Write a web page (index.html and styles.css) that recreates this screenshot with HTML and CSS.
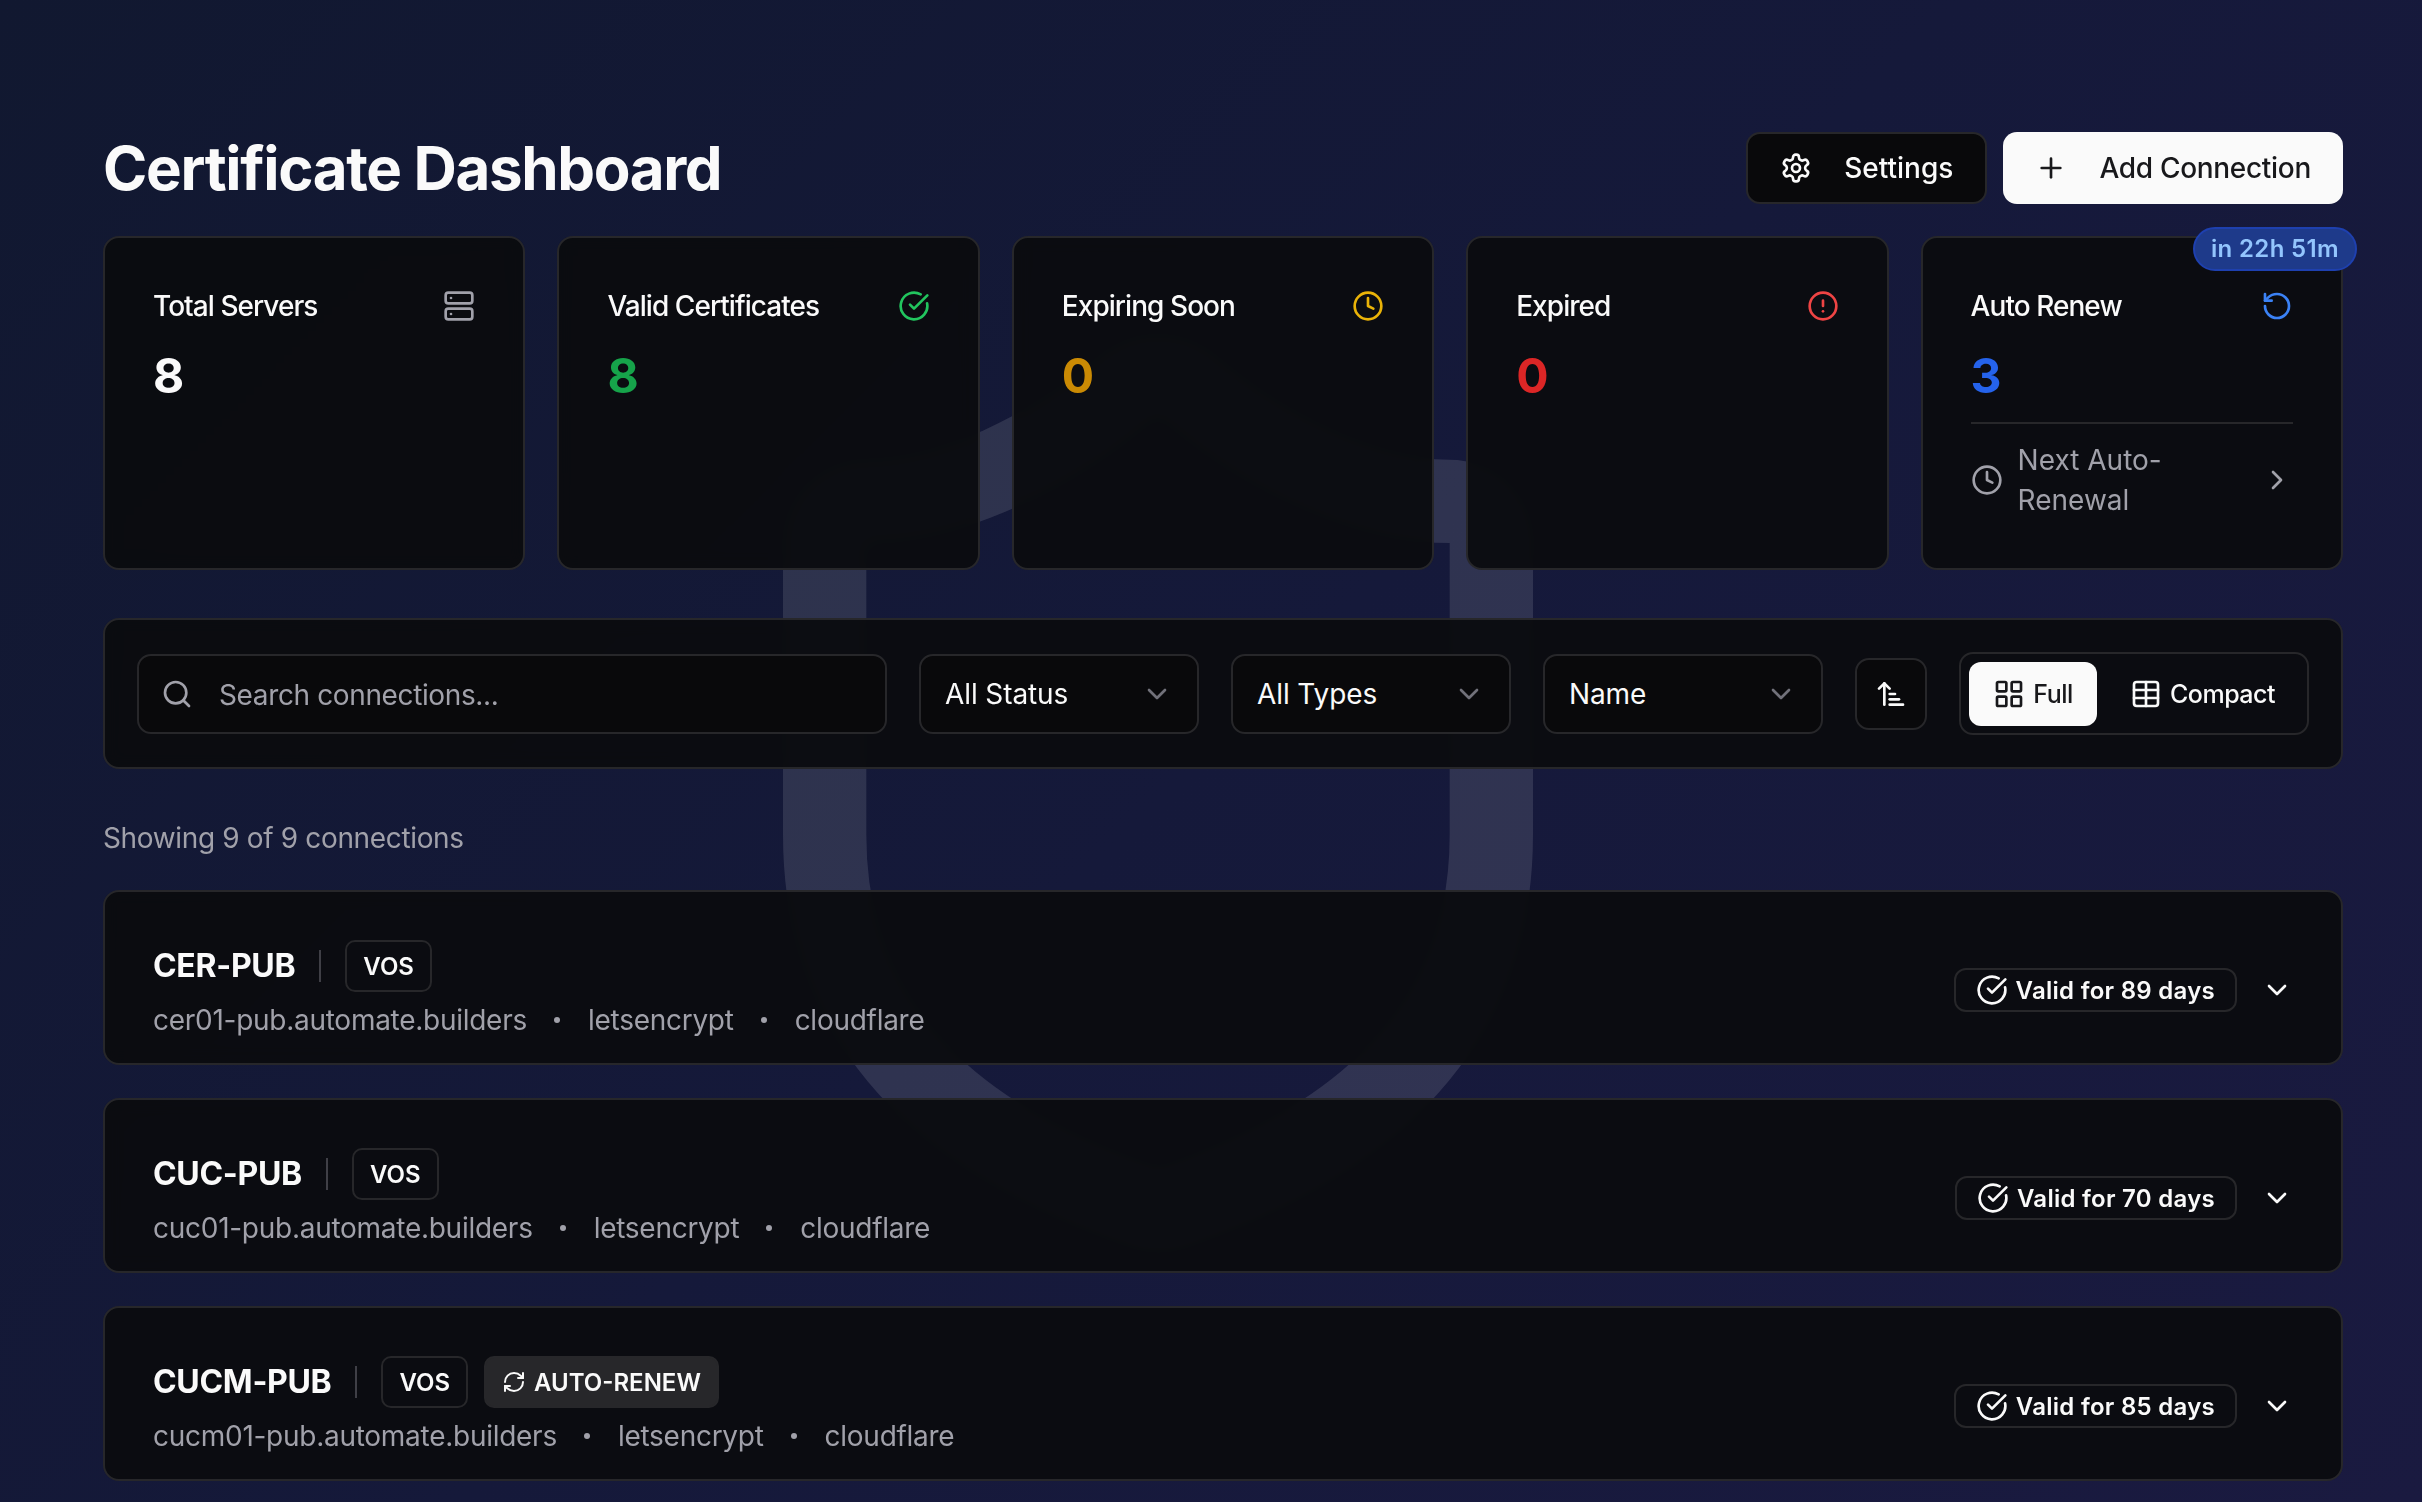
FILE: index.html
```html
<!DOCTYPE html>
<html lang="en">

<head>
    <meta charset="UTF-8">
    <meta name="viewport" content="width=device-width, initial-scale=1.0">
    <title>Certificate Dashboard</title>
    <link rel="stylesheet" href="styles.css">
</head>

<body>
    <!-- icon sprite -->
    <svg class="sprite" xmlns="http://www.w3.org/2000/svg">
        <symbol id="i-shield" viewBox="0 0 24 24"><path d="M20 13c0 5-3.5 7.5-7.66 8.95a1 1 0 0 1-.67-.01C7.5 20.5 4 18 4 13V6a1 1 0 0 1 1-1c2 0 4.5-1.2 6.24-2.72a1.17 1.17 0 0 1 1.52 0C14.51 3.81 17 5 19 5a1 1 0 0 1 1 1z"/></symbol>
        <symbol id="i-gear" viewBox="0 0 24 24"><path d="M12.22 2h-.44a2 2 0 0 0-2 2v.18a2 2 0 0 1-1 1.73l-.43.25a2 2 0 0 1-2 0l-.15-.08a2 2 0 0 0-2.73.73l-.22.38a2 2 0 0 0 .73 2.73l.15.1a2 2 0 0 1 1 1.72v.51a2 2 0 0 1-1 1.74l-.15.09a2 2 0 0 0-.73 2.73l.22.38a2 2 0 0 0 2.73.73l.15-.08a2 2 0 0 1 2 0l.43.25a2 2 0 0 1 1 1.73V20a2 2 0 0 0 2 2h.44a2 2 0 0 0 2-2v-.18a2 2 0 0 1 1-1.73l.43-.25a2 2 0 0 1 2 0l.15.08a2 2 0 0 0 2.73-.73l.22-.39a2 2 0 0 0-.73-2.73l-.15-.08a2 2 0 0 1-1-1.74v-.5a2 2 0 0 1 1-1.74l.15-.09a2 2 0 0 0 .73-2.73l-.22-.38a2 2 0 0 0-2.73-.73l-.15.08a2 2 0 0 1-2 0l-.43-.25a2 2 0 0 1-1-1.73V4a2 2 0 0 0-2-2z"/><circle cx="12" cy="12" r="3"/></symbol>
        <symbol id="i-plus" viewBox="0 0 24 24"><path d="M5 12h14"/><path d="M12 5v14"/></symbol>
        <symbol id="i-server" viewBox="0 0 24 24"><rect width="20" height="8" x="2" y="2" rx="2"/><rect width="20" height="8" x="2" y="14" rx="2"/><path d="M6 6h.01"/><path d="M6 18h.01"/></symbol>
        <symbol id="i-check" viewBox="0 0 24 24"><path d="M21.801 10A10 10 0 1 1 17 3.335"/><path d="m9 11 3 3L22 4"/></symbol>
        <symbol id="i-clock" viewBox="0 0 24 24"><circle cx="12" cy="12" r="10"/><path d="M12 6v6l4 2"/></symbol>
        <symbol id="i-alert" viewBox="0 0 24 24"><circle cx="12" cy="12" r="10"/><path d="M12 8v4"/><path d="M12 16h.01"/></symbol>
        <symbol id="i-rotate" viewBox="0 0 24 24"><path d="M3 12a9 9 0 1 0 9-9 9.75 9.75 0 0 0-6.74 2.74L3 8"/><path d="M3 3v5h5"/></symbol>
        <symbol id="i-right" viewBox="0 0 24 24"><path d="m9 18 6-6-6-6"/></symbol>
        <symbol id="i-down" viewBox="0 0 24 24"><path d="m6 9 6 6 6-6"/></symbol>
        <symbol id="i-search" viewBox="0 0 24 24"><path d="m21 21-4.34-4.34"/><circle cx="11" cy="11" r="8"/></symbol>
        <symbol id="i-sort" viewBox="0 0 24 24"><path d="m3 8 4-4 4 4"/><path d="M7 4v16"/><path d="M11 12h4"/><path d="M11 16h7"/><path d="M11 20h10"/></symbol>
        <symbol id="i-grid" viewBox="0 0 24 24"><rect width="7" height="7" x="3" y="3" rx="1"/><rect width="7" height="7" x="14" y="3" rx="1"/><rect width="7" height="7" x="14" y="14" rx="1"/><rect width="7" height="7" x="3" y="14" rx="1"/></symbol>
        <symbol id="i-table" viewBox="0 0 24 24"><path d="M12 3v18"/><rect width="18" height="18" x="3" y="3" rx="2"/><path d="M3 9h18"/><path d="M3 15h18"/></symbol>
        <symbol id="i-refresh" viewBox="0 0 24 24"><path d="M3 12a9 9 0 0 1 9-9 9.75 9.75 0 0 1 6.74 2.74L21 8"/><path d="M21 3v5h-5"/><path d="M21 12a9 9 0 0 1-9 9 9.75 9.75 0 0 1-6.74-2.74L3 16"/><path d="M8 16H3v5"/></symbol>
    </svg>

    <svg class="watermark"><use href="#i-shield"/></svg>

    <div class="page">
        <header class="top">
            <h1>Certificate Dashboard</h1>
            <div class="top-actions">
                <button class="btn btn-dark"><svg class="ico"><use href="#i-gear"/></svg>Settings</button>
                <button class="btn btn-light"><svg class="ico"><use href="#i-plus"/></svg>Add Connection</button>
            </div>
        </header>

        <section class="stats">
            <div class="stat">
                <div class="stat-head"><span>Total Servers</span><svg class="ico muted"><use href="#i-server"/></svg></div>
                <div class="stat-num">8</div>
            </div>
            <div class="stat">
                <div class="stat-head"><span>Valid Certificates</span><svg class="ico ic-green"><use href="#i-check"/></svg></div>
                <div class="stat-num num-green">8</div>
            </div>
            <div class="stat">
                <div class="stat-head"><span>Expiring Soon</span><svg class="ico ic-yellow"><use href="#i-clock"/></svg></div>
                <div class="stat-num num-yellow">0</div>
            </div>
            <div class="stat">
                <div class="stat-head"><span>Expired</span><svg class="ico ic-red"><use href="#i-alert"/></svg></div>
                <div class="stat-num num-red">0</div>
            </div>
            <div class="stat">
                <span class="next-badge">in 22h 51m</span>
                <div class="stat-head"><span>Auto Renew</span><svg class="ico ic-blue"><use href="#i-rotate"/></svg></div>
                <div class="stat-num num-blue">3</div>
                <div class="next-row">
                    <svg class="ico"><use href="#i-clock"/></svg>
                    <span class="next-text">Next Auto-Renewal</span>
                    <svg class="ico"><use href="#i-right"/></svg>
                </div>
            </div>
        </section>

        <section class="filters">
            <div class="search">
                <svg class="ico"><use href="#i-search"/></svg>
                <span>Search connections...</span>
            </div>
            <div class="select"><span>All Status</span><svg class="ico"><use href="#i-down"/></svg></div>
            <div class="select"><span>All Types</span><svg class="ico"><use href="#i-down"/></svg></div>
            <div class="select"><span>Name</span><svg class="ico"><use href="#i-down"/></svg></div>
            <button class="sort-btn"><svg class="ico"><use href="#i-sort"/></svg></button>
            <div class="view-toggle">
                <button class="view-btn active"><svg class="ico-sm"><use href="#i-grid"/></svg>Full</button>
                <button class="view-btn"><svg class="ico-sm"><use href="#i-table"/></svg>Compact</button>
            </div>
        </section>

        <p class="showing">Showing 9 of 9 connections</p>

        <section class="list">
            <article class="conn">
                <div class="conn-main">
                    <div class="conn-title">
                        <h2>CER-PUB</h2>
                        <i class="bar"></i>
                        <div class="tags"><span class="tag">VOS</span></div>
                    </div>
                    <div class="conn-sub"><span>cer01-pub.automate.builders</span><i class="dot"></i><span>letsencrypt</span><i class="dot"></i><span>cloudflare</span></div>
                </div>
                <div class="valid"><svg class="ico"><use href="#i-check"/></svg>Valid for 89 days</div>
                <svg class="ico expand"><use href="#i-down"/></svg>
            </article>
            <article class="conn">
                <div class="conn-main">
                    <div class="conn-title">
                        <h2>CUC-PUB</h2>
                        <i class="bar"></i>
                        <div class="tags"><span class="tag">VOS</span></div>
                    </div>
                    <div class="conn-sub"><span>cuc01-pub.automate.builders</span><i class="dot"></i><span>letsencrypt</span><i class="dot"></i><span>cloudflare</span></div>
                </div>
                <div class="valid"><svg class="ico"><use href="#i-check"/></svg>Valid for 70 days</div>
                <svg class="ico expand"><use href="#i-down"/></svg>
            </article>
            <article class="conn">
                <div class="conn-main">
                    <div class="conn-title">
                        <h2>CUCM-PUB</h2>
                        <i class="bar"></i>
                        <div class="tags"><span class="tag">VOS</span><span class="tag tag-auto"><svg class="ico-xs"><use href="#i-refresh"/></svg>AUTO-RENEW</span></div>
                    </div>
                    <div class="conn-sub"><span>cucm01-pub.automate.builders</span><i class="dot"></i><span>letsencrypt</span><i class="dot"></i><span>cloudflare</span></div>
                </div>
                <div class="valid"><svg class="ico"><use href="#i-check"/></svg>Valid for 85 days</div>
                <svg class="ico expand"><use href="#i-down"/></svg>
            </article>
        </section>
    </div>
</body>

</html>
```

FILE: styles.css
```css
* {
    padding: 0;
    margin: 0;
    box-sizing: border-box;
}

html,
body {
    height: 100%;
    overflow: hidden;
}

body {
    background: linear-gradient(135deg, #111830 0%, #15193a 50%, #1a1a40 100%);
    font-family: Inter, "Liberation Sans", sans-serif;
    color: #fafafa;
}

button {
    font: inherit;
    color: inherit;
    background: none;
    border: 0;
}

.sprite {
    display: none;
}

.watermark {
    position: fixed;
    left: 658px;
    top: 293px;
    width: 1000px;
    height: 1000px;
    fill: none;
    stroke: rgba(255, 255, 255, 0.115);
    stroke-width: 2;
}

.ico,
.ico-sm,
.ico-xs {
    flex: none;
    fill: none;
    stroke: currentColor;
    stroke-width: 2;
    stroke-linecap: round;
    stroke-linejoin: round;
}

.ico {
    width: 32px;
    height: 32px;
}

.ico-sm {
    width: 32px;
    height: 32px;
}

.ico-xs {
    width: 24px;
    height: 24px;
}

.muted {
    color: #a1a1aa;
}

.page {
    position: relative;
    padding: 132px 79px 0 103px;
}

.top {
    display: flex;
    justify-content: space-between;
    align-items: center;
    margin-bottom: 32px;
}

h1 {
    font-size: 60px;
    line-height: 72px;
    font-weight: 750;
    letter-spacing: -1.35px;
}

.top-actions {
    display: flex;
    gap: 16px;
}

.btn {
    display: flex;
    align-items: center;
    gap: 32px;
    height: 72px;
    padding: 0 32px;
    border-radius: 14px;
    font-size: 28px;
    font-weight: 500;
}

.btn-dark {
    background: #09090b;
    border: 2px solid #27272a;
}

.btn-light {
    background: #fafafa;
    color: #18181b;
    letter-spacing: -0.3px;
}

.stats {
    display: grid;
    grid-template-columns: repeat(5, 1fr);
    gap: 32px;
    margin-bottom: 48px;
}

.stat {
    position: relative;
    padding: 48px;
    background: rgba(11, 12, 15, 0.95);
    border: 2px solid #27272a;
    border-radius: 16px;
    backdrop-filter: blur(8px);
}

.stat-head {
    display: flex;
    justify-content: space-between;
    align-items: center;
    height: 40px;
    font-size: 28px;
    font-weight: 550;
    letter-spacing: -0.95px;
}

.stat-num {
    margin-top: 18px;
    font-size: 48px;
    line-height: 64px;
    font-weight: 750;
}

.ic-green { color: #22c55e; }
.ic-yellow { color: #eab308; }
.ic-red { color: #ef4444; }
.ic-blue { color: #3b82f6; }
.num-green { color: #16a34a; }
.num-yellow { color: #ca8a04; }
.num-red { color: #dc2626; }
.num-blue { color: #2563eb; }

.next-badge {
    position: absolute;
    top: -11px;
    right: -16px;
    padding: 0 16px;
    height: 44px;
    line-height: 40px;
    background: #1e3a8a;
    border: 2px solid #1e40af;
    border-radius: 22px;
    color: #93c5fd;
    font-size: 24px;
    font-weight: 600;
    letter-spacing: 0.35px;
}

.next-row {
    display: flex;
    align-items: center;
    gap: 15px;
    margin-top: 14px;
    padding-top: 16px;
    border-top: 2px solid #27272a;
    color: #a1a1aa;
    font-size: 28px;
    line-height: 40px;
}

.next-text {
    flex: 1;
}

.filters {
    display: flex;
    align-items: center;
    gap: 32px;
    padding: 32px;
    background: rgba(11, 12, 15, 0.95);
    border: 2px solid #27272a;
    border-radius: 16px;
    backdrop-filter: blur(8px);
}

.search,
.select {
    display: flex;
    align-items: center;
    height: 80px;
    background: #09090b;
    border: 2px solid #27272a;
    border-radius: 14px;
    font-size: 28px;
}

.search {
    flex: 1;
    gap: 26px;
    padding-left: 22px;
    color: #a1a1aa;
    letter-spacing: -0.37px;
}

.search span {
    padding-top: 2px;
}

.select {
    flex: none;
    justify-content: space-between;
    width: 280px;
    padding: 0 24px;
    letter-spacing: -0.1px;
}

.select .ico {
    color: #71717a;
}

.sort-btn {
    flex: none;
    display: flex;
    align-items: center;
    justify-content: center;
    width: 72px;
    height: 72px;
    background: #09090b;
    border: 2px solid #27272a;
    border-radius: 14px;
}

.view-toggle {
    flex: none;
    display: flex;
    width: 350px;
    height: 83px;
    padding: 8px;
    border: 2px solid #27272a;
    border-radius: 14px;
}

.view-btn {
    display: flex;
    align-items: center;
    justify-content: flex-end;
    gap: 8px;
    flex: 1;
    height: 64px;
    padding-right: 24px;
    border-radius: 12px;
    font-size: 25px;
    font-weight: 500;
    letter-spacing: -0.5px;
}

.view-btn.active {
    flex: none;
    width: 128px;
    justify-content: center;
    padding-right: 0;
    background: #fafafa;
    color: #18181b;
}

.showing {
    margin: 49px 0 32px;
    font-size: 28px;
    line-height: 40px;
    color: #a1a1aa;
    letter-spacing: -0.35px;
}

.list {
    display: flex;
    flex-direction: column;
    gap: 33px;
}

.conn {
    display: flex;
    align-items: center;
    gap: 24px;
    height: 175px;
    padding: 48px 48px 23px;
    background: rgba(11, 12, 15, 0.95);
    border: 2px solid #27272a;
    border-radius: 16px;
    backdrop-filter: blur(8px);
}

.conn-main {
    flex: 1;
}

.conn-title {
    display: flex;
    align-items: center;
    gap: 24px;
}

h2 {
    font-size: 32px;
    line-height: 40px;
    font-weight: 650;
    letter-spacing: -0.3px;
}

.bar {
    width: 2px;
    height: 32px;
    background: #3f3f46;
}

.tags {
    display: flex;
    gap: 16px;
}

.tag {
    display: flex;
    align-items: center;
    gap: 8px;
    height: 52px;
    padding: 0 16px;
    border: 2px solid #27272a;
    border-radius: 10px;
    font-size: 24px;
    font-weight: 600;
}

.tag-auto {
    background: #27272a;
}

.conn-sub {
    display: flex;
    align-items: center;
    margin-top: 8px;
    font-size: 28px;
    line-height: 40px;
    color: #a1a1aa;
    letter-spacing: -0.27px;
}

.dot {
    width: 6px;
    height: 6px;
    margin: 0 28px 0 27px;
    border-radius: 50%;
    background: #a1a1aa;
}

.valid {
    display: flex;
    align-items: center;
    gap: 8px;
    height: 44px;
    padding: 0 20px;
    border: 2px solid #27272a;
    border-radius: 12px;
    font-size: 24px;
    font-weight: 600;
    letter-spacing: 0.27px;
}

.expand {
    color: #fafafa;
}
```
